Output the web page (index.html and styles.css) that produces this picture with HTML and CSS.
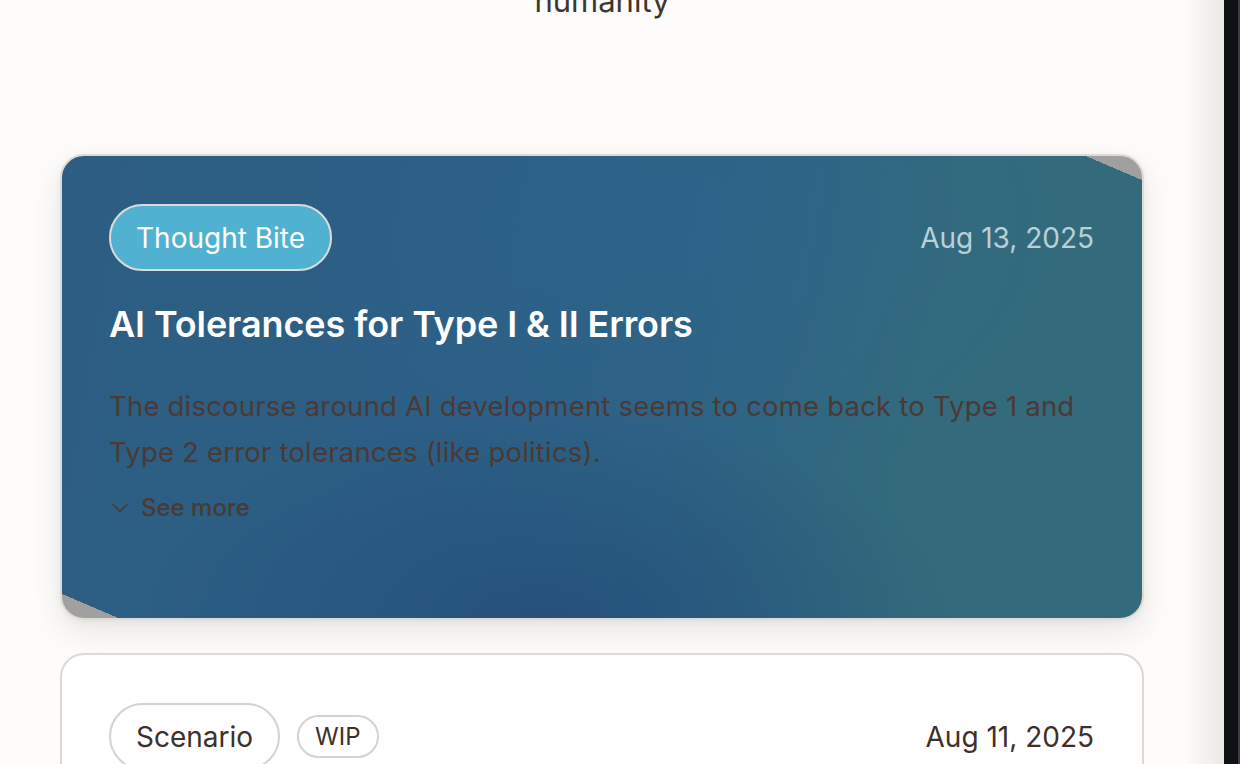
FILE: index.html
```html
<!DOCTYPE html>
<html lang="en">
<head>
<meta charset="utf-8">
<title>Posts</title>
<link rel="stylesheet" href="styles.css">
</head>
<body>
<div class="page">
  <main class="main">
    <p class="intro">humanity</p>
    <section class="list">
      <article class="card card-featured">
        <div class="card-head">
          <div class="tags">
            <span class="pill pill-bite">Thought Bite</span>
          </div>
          <time class="date date-light">Aug 13, 2025</time>
        </div>
        <h2 class="title">AI Tolerances for Type I &amp; II Errors</h2>
        <p class="excerpt">The discourse around AI development seems to come back to Type 1 and Type 2 error tolerances (like politics).</p>
        <button class="more" type="button">
          <svg class="chev" width="18" height="18" viewBox="0 0 18 18" fill="none" stroke="currentColor" stroke-width="1.5" stroke-linecap="round" stroke-linejoin="round"><path d="M2 5.5l7 7 7-7"/></svg>
          <span>See more</span>
        </button>
      </article>
      <article class="card card-plain">
        <div class="card-head">
          <div class="tags">
            <span class="pill pill-outline">Scenario</span>
            <span class="pill pill-small">WIP</span>
          </div>
          <time class="date">Aug 11, 2025</time>
        </div>
      </article>
    </section>
  </main>
  <div class="rail"></div>
</div>
</body>
</html>
```

FILE: styles.css
```css
* { box-sizing: border-box; }
html, body { margin: 0; padding: 0; height: 100%; overflow: hidden; }
body {
  font-family: Inter, "Noto Sans", "Liberation Sans", sans-serif;
  color: #3d3029;
  background: #fdfcfb;
}
.page {
  display: flex;
  height: 764px;
}
.main {
  flex: 1;
  padding-right: 20px;
  background: linear-gradient(to right, rgba(253,252,251,0) 0, rgba(253,252,251,0) calc(100% - 40px), #ebe9e7 100%), #fdfcfb;
  display: flex;
  flex-direction: column;
  align-items: center;
  overflow: hidden;
}
.rail {
  width: 16px;
  background: #0f1014;
  border-right: 2px solid #3b3b40;
}
.intro {
  margin: -19px 0 0 0;
  font-size: 31px;
  line-height: 40px;
  color: #3d3530;
  text-align: center;
}
.list {
  margin-top: 133px;
  width: 1084px;
  display: flex;
  flex-direction: column;
  gap: 33px;
}
.card {
  border-radius: 24px;
  border: 2px solid #dedad6;
  padding: 48px 47px 0 47px;
}
.card-featured {
  height: 466px;
  background:
    linear-gradient(to bottom left, #a0a0a0 0, #a0a0a0 2.6%, rgba(0,0,0,0) 2.6%, rgba(0,0,0,0) 97.4%, #a0a0a0 97.4%),
    radial-gradient(ellipse 38% 45% at 45% 100%, rgba(36,80,122,0.9), rgba(36,80,122,0) 100%),
    radial-gradient(ellipse 40% 60% at 55% 15%, rgba(45,100,140,0.6), rgba(45,100,140,0) 100%),
    linear-gradient(100deg, #2d5d82 0%, #2c5f86 40%, #2e6384 58%, #336b7c 78%, #336b7c 100%);
  box-shadow: 0 12px 30px rgba(60,50,40,0.10), 0 2px 6px rgba(60,50,40,0.06);
}
.card-plain {
  height: 200px;
  background: #ffffff;
  border-color: #dcd8d3;
}
.card-head {
  display: flex;
  align-items: center;
  justify-content: space-between;
}
.tags {
  display: flex;
  align-items: center;
  gap: 17px;
}
.pill {
  display: inline-flex;
  align-items: center;
  justify-content: center;
  border-radius: 999px;
  border: 2px solid #d6d2cc;
  font-size: 28px;
  height: 67px;
  padding: 0 25px;
  line-height: 1;
}
.pill-bite {
  background: #50b2d0;
  color: #ffffff;
  border-color: #d9dcd8;
}
.pill-outline {
  background: #ffffff;
  color: #3d3029;
  font-size: 28px;
}
.pill-small {
  height: 43px;
  font-size: 24px;
  padding: 0 16px;
  background: #ffffff;
  color: #3d3029;
}
.date {
  font-size: 28px;
  color: #3d3029;
  margin-right: 1px;
}
.date-light {
  color: #b9d0d8;
}
.title {
  margin: 31px 0 0 0;
  font-size: 36px;
  font-weight: 600;
  color: #ffffff;
  line-height: 44px;
  letter-spacing: -0.1px;
}
.excerpt {
  margin: 37px 0 0 0;
  font-size: 27.5px;
  line-height: 46px;
  letter-spacing: 0.2px;
  color: #4a3a33;
}
.more {
  margin-top: 18px;
  display: inline-flex;
  align-items: center;
  gap: 12px;
  padding: 0;
  border: 0;
  background: none;
  font-family: inherit;
  font-size: 24px;
  line-height: 29px;
  font-weight: 500;
  color: #4a3a33;
  cursor: pointer;
}
.chev { margin-left: 2px; }
```
